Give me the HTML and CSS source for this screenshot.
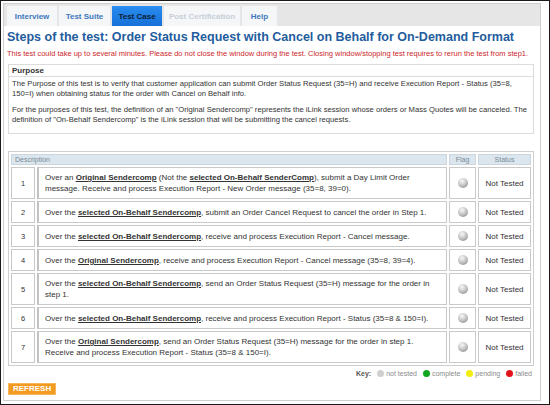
FILE: index.html
```html
<!DOCTYPE html>
<html>
<head>
<meta charset="utf-8">
<link rel="stylesheet" href="styles.css">
</head>
<body>
<div class="frame">
  <div class="panel">
    <div class="tabbar">
      <div class="tab">Interview</div>
      <div class="tab">Test Suite</div>
      <div class="tab active">Test Case</div>
      <div class="tab disabled">Post Certification</div>
      <div class="tab">Help</div>
    </div>
    <div class="content">
      <h1 class="title">Steps of the test: Order Status Request with Cancel on Behalf for On-Demand Format</h1>
      <p class="warn">This test could take up to several minutes. Please do not close the window during the test. Closing window/stopping test requires to rerun the test from step1.</p>
      <div class="purpose-head">Purpose</div>
      <div class="purpose-body">
        <p>The Purpose of this test is to verify that customer application can submit Order Status Request (35=H) and receive Execution Report - Status (35=8, 150=I) when obtaining status for the order with Cancel on Behalf info.</p>
        <p>For the purposes of this test, the definition of an "Original Sendercomp" represents the iLink session whose orders or Mass Quotes will be canceled. The definition of "On-Behalf Sendercomp" is the iLink session that will be submitting the cancel requests.</p>
      </div>
      <table class="steps">
        <thead>
          <tr><th colspan="2" class="th-desc">Description</th><th class="th-flag">Flag</th><th class="th-status">Status</th></tr>
        </thead>
        <tbody>
          <tr><td class="num">1</td><td class="desc">Over an <b>Original Sendercomp</b> (Not the <b>selected On-Behalf SenderComp</b>), submit a Day Limit Order<br>message. Receive and process Execution Report - New Order message (35=8, 39=0).</td><td class="flag"><span class="ball"></span></td><td class="status">Not Tested</td></tr>
          <tr><td class="num">2</td><td class="desc">Over the <b>selected On-Behalf Sendercomp</b>, submit an Order Cancel Request to cancel the order in Step 1.</td><td class="flag"><span class="ball"></span></td><td class="status">Not Tested</td></tr>
          <tr><td class="num">3</td><td class="desc">Over the <b>selected On-Behalf Sendercomp</b>, receive and process Execution Report - Cancel message.</td><td class="flag"><span class="ball"></span></td><td class="status">Not Tested</td></tr>
          <tr><td class="num">4</td><td class="desc">Over the <b>Original Sendercomp</b>, receive and process Execution Report - Cancel message (35=8, 39=4).</td><td class="flag"><span class="ball"></span></td><td class="status">Not Tested</td></tr>
          <tr><td class="num">5</td><td class="desc">Over the <b>selected On-Behalf Sendercomp</b>, send an Order Status Request (35=H) message for the order in<br>step 1.</td><td class="flag"><span class="ball"></span></td><td class="status">Not Tested</td></tr>
          <tr><td class="num">6</td><td class="desc">Over the <b>selected On-Behalf Sendercomp</b>, receive and process Execution Report - Status (35=8 &amp; 150=I).</td><td class="flag"><span class="ball"></span></td><td class="status">Not Tested</td></tr>
          <tr><td class="num">7</td><td class="desc">Over the <b>Original Sendercomp</b>, send an Order Status Request (35=H) message for the order in step 1.<br>Receive and process Execution Report - Status (35=8 &amp; 150=I).</td><td class="flag"><span class="ball"></span></td><td class="status">Not Tested</td></tr>
        </tbody>
      </table>
      <div class="key">
        <b>Key:</b>
        <span class="kitem"><span class="dot gray"></span>not tested</span>
        <span class="kitem"><span class="dot green"></span>complete</span>
        <span class="kitem"><span class="dot yellow"></span>pending</span>
        <span class="kitem"><span class="dot red"></span>failed</span>
      </div>
      <div class="refresh">REFRESH</div>
    </div>
  </div>
</div>
</body>
</html>
```
FILE: styles.css
```css
* { box-sizing: border-box; }
html, body { margin: 0; padding: 0; background: #fff; }
body { font-family: "Liberation Sans", Arial, sans-serif; color: #333; }

.frame {
  width: 550px;
  height: 405px;
  border: 1px solid #1a1a1a;
  padding: 2px 8px 3px 2px;
  background: #fff;
}
.panel {
  height: 100%;
  border: 1px solid #cfcfcf;
  display: flex;
  flex-direction: column;
}
.tabbar {
  display: flex;
  gap: 2px;
  background: #e6e6e6;
  height: 22px;
  padding: 2px 0 0 3px;
}
.tab {
  height: 20px;
  display: flex;
  align-items: center;
  justify-content: center;
  white-space: nowrap;
  background: #f4f6f8;
  color: #3f77bd;
  font-weight: bold;
  font-size: 8px;
}
.tab:nth-child(1) { width: 50px; }
.tab:nth-child(2) { width: 51px; }
.tab:nth-child(3) { width: 50px; }
.tab:nth-child(4) { width: 76px; }
.tab:nth-child(5) { width: 35px; }
.tab.active {
  background: linear-gradient(#2a8df0, #1670d8);
  color: #0b1c33;
}
.tab.disabled { color: #c8d0d8; }

.content {
  padding: 0 6px 0 4px;
}
.title {
  margin: 4px 0 0 -1px;
  font-size: 12.5px;
  line-height: 15px;
  color: #1f5d9e;
  font-weight: bold;
  white-space: nowrap;
}
.warn {
  margin: 4px 0 0 -1px;
  font-size: 7.5px;
  line-height: 9px;
  color: #cc1f2c;
  white-space: nowrap;
}
.purpose-head {
  margin-top: 6px;
  border: 1px solid #dcdcdc;
  height: 13px;
  font-size: 8px;
  font-weight: bold;
  padding: 1px 0 0 3px;
  line-height: 10px;
  color: #333;
}
.purpose-body {
  border: 1px solid #dcdcdc;
  border-top: none;
  padding: 2px 3px 8px 3px;
  font-size: 7.65px;
  line-height: 10px;
  color: #333;
}
.purpose-body p { margin: 0 0 6px 0; }
.purpose-body p:last-child { margin-bottom: 0; }

.steps {
  margin-top: 17px;
  width: 100%;
  border: 1px solid #cfcfcf;
  border-spacing: 2px;
  font-size: 8px;
  line-height: 11px;
  color: #333;
}
.steps th {
  background: #dbe6ee;
  color: #7a8a96;
  font-weight: normal;
  font-size: 7px;
  height: 11px;
  line-height: 9px;
  padding: 0;
  border: 1px solid #cdd6dd;
}
.th-desc { text-align: left; padding-left: 3px !important; }
.th-flag { width: 27px; }
.th-status { width: 53px; }
.steps td {
  border: 1px solid #c9c9c9;
  padding: 4px 3px;
  height: 22px;
}
.steps td.num { width: 24px; text-align: center; font-size: 7.5px; padding: 0; }
.steps td.desc { padding-left: 6px; border-left: 2px solid #c2c2c2; }
.steps td.flag { text-align: center; }
.steps td.status { text-align: center; }
.steps b { font-weight: bold; text-decoration: underline; }
.ball {
  display: inline-block;
  width: 10px;
  height: 10px;
  border-radius: 50%;
  background: radial-gradient(circle at 40% 30%, #f8f8f8 0%, #c8c8c8 45%, #7d7d7d 100%);
  vertical-align: middle;
}

.key {
  display: flex;
  justify-content: flex-end;
  align-items: center;
  gap: 4px;
  margin-top: 4px;
  font-size: 7px;
  color: #8a8a8a;
  padding-right: 2px;
}
.key b { color: #555; }
.kitem { display: inline-flex; align-items: center; gap: 2px; margin-left: 2px; }
.dot {
  display: inline-block;
  width: 7px;
  height: 7px;
  border-radius: 50%;
}
.dot.gray { background: #cfcfcf; }
.dot.green { background: #12a51e; }
.dot.yellow { background: #f2ee10; }
.dot.red { background: #e3131c; }

.refresh {
  margin-top: 4px;
  display: inline-block;
  background: #f29a22;
  border: 1px solid #f6b55a;
  color: #fff;
  font-weight: bold;
  font-size: 8px;
  line-height: 10px;
  padding: 0 4px;
  height: 12px;
}
```
